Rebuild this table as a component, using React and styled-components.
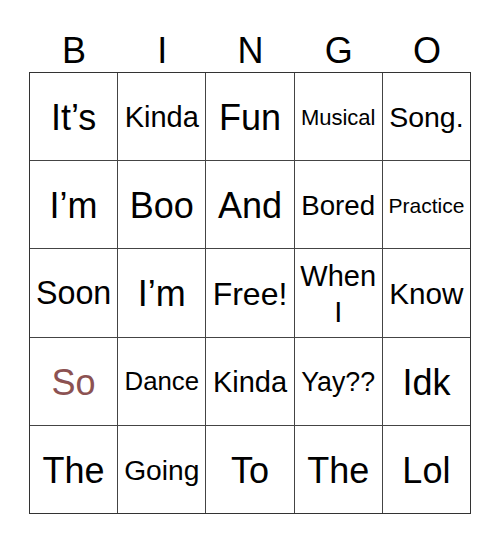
import React from "react";
import styled, { createGlobalStyle } from "styled-components";

const Global = createGlobalStyle`
  html, body { margin: 0; padding: 0; background: #fff; }
  body { font-family: "Liberation Sans", Arial, sans-serif; }
`;

const Page = styled.div`
  width: 500px;
  height: 544px;
  padding: 30px 0 0 29px;
  box-sizing: border-box;
`;

const Header = styled.div`
  display: grid;
  grid-template-columns: repeat(5, 1fr);
  width: 442px;
  height: 42px;
  font-size: 36px;
  line-height: 42px;
  color: #000;
  text-align: center;
  padding-left: 1px;
  box-sizing: border-box;
`;

const Board = styled.div`
  display: grid;
  grid-template-columns: repeat(5, 1fr);
  grid-template-rows: repeat(5, 1fr);
  gap: 1px;
  width: 442px;
  height: 442px;
  box-sizing: border-box;
  border: 1px solid #333;
  background: #444;
`;

const Cell = styled.div`
  background: #fff;
  display: flex;
  align-items: center;
  justify-content: center;
  text-align: center;
  padding-top: 2px;
  box-sizing: border-box;
  font-size: ${(p) => p.$size}px;
  line-height: ${(p) => (p.$multi ? "36px" : "1.15")};
  color: ${(p) => (p.$accent ? "#8c5252" : "#000")};
  white-space: pre-line;
`;

const cells = [
  ["It’s", 36], ["Kinda", 29], ["Fun", 36], ["Musical", 22], ["Song.", 28.5],
  ["I’m", 36], ["Boo", 36], ["And", 36], ["Bored", 27.7], ["Practice", 21],
  ["Soon", 32.3], ["I’m", 36], ["Free!", 32], ["When\nI", 29, true], ["Know", 29.7],
  ["So", 36, false, true], ["Dance", 25.8], ["Kinda", 29], ["Yay??", 26.8], ["Idk", 36],
  ["The", 36], ["Going", 28.2], ["To", 36], ["The", 36], ["Lol", 36],
];

export default function App() {
  return (
    <Page>
      <Global />
      <Header>
        {["B", "I", "N", "G", "O"].map((l) => (
          <div key={l}>{l}</div>
        ))}
      </Header>
      <Board>
        {cells.map(([t, s, multi, accent], i) => (
          <Cell key={i} $size={s} $multi={multi} $accent={accent}>
            {t}
          </Cell>
        ))}
      </Board>
    </Page>
  );
}
